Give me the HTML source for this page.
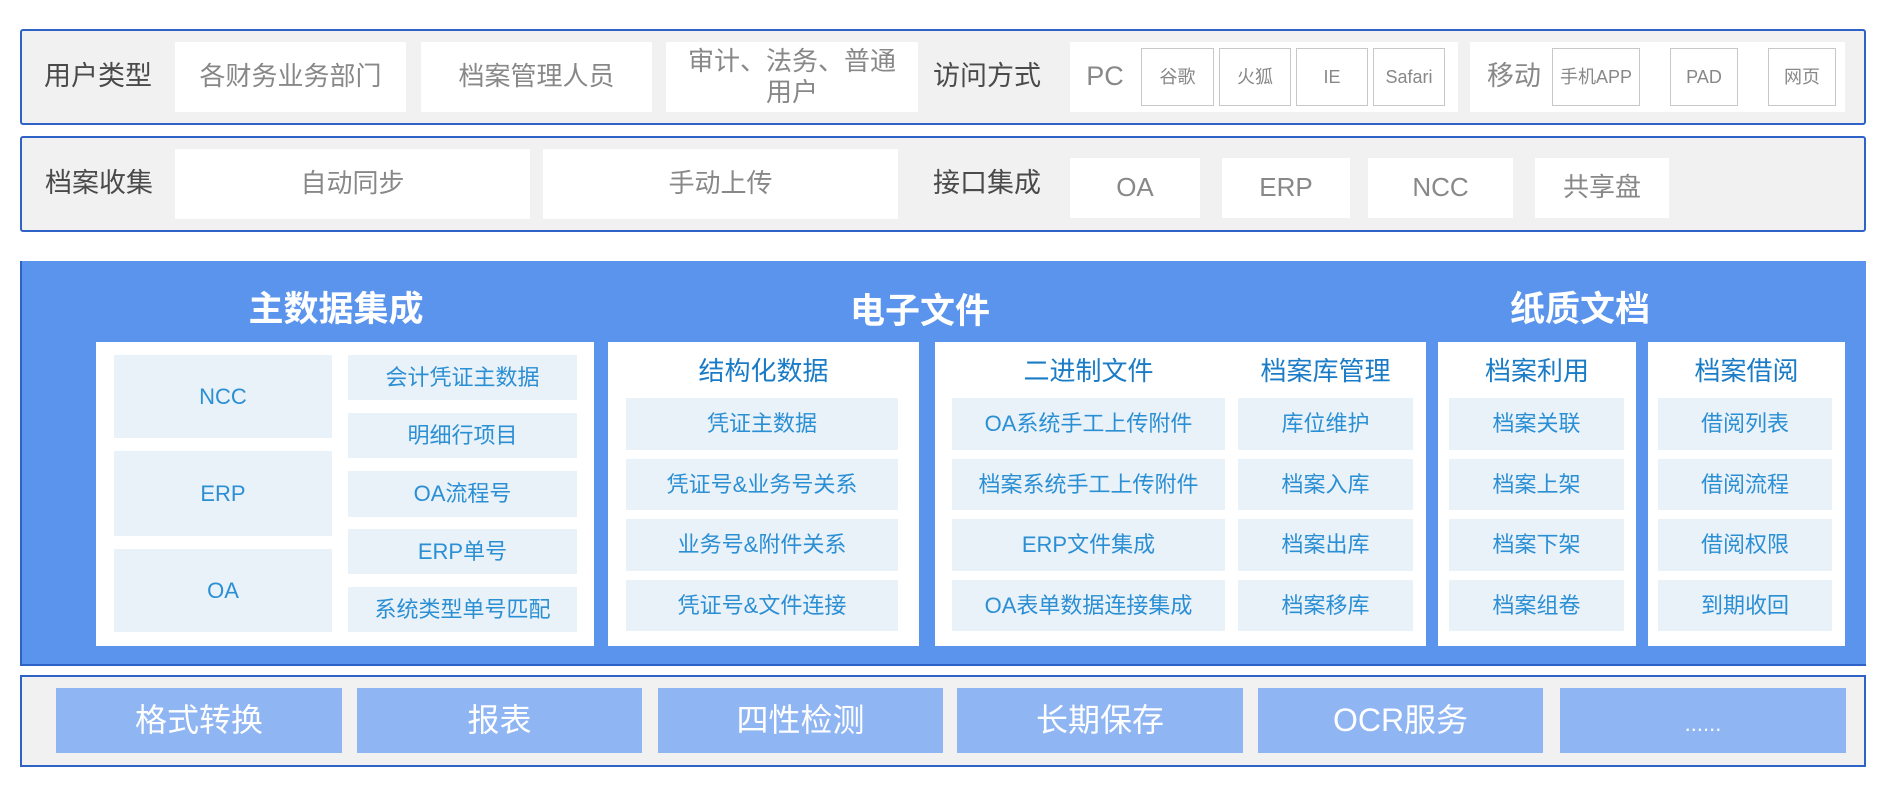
<!DOCTYPE html>
<html><head><meta charset="utf-8"><style>
*{margin:0;padding:0;box-sizing:border-box}
body{width:1881px;height:790px;background:#fff;position:relative;overflow:hidden;font-family:"Liberation Sans","Noto Sans CJK SC",sans-serif}
.a{position:absolute;display:flex;align-items:center;justify-content:center;text-align:center;line-height:1.15}
.row{background:#f1f1f1;border:2px solid #2e62c6;border-radius:3px}
.lab{color:#4a4a4a;font-size:27px;font-weight:normal}
.c{background:#fff;color:#888;font-size:26px}
.s{border:1.5px solid #c8c8c8;color:#888;font-size:18px;background:#fff}
.t{color:#fff;font-size:35px;font-weight:bold}
.p{background:#fff}
.h{color:#1a7bc6;font-size:26px}
.i{background:#e9f1f9;color:#2b8fd4;font-size:22px}
.b{background:#8fb5f3;color:#fff;font-size:32px}
</style></head><body>
<!-- row1 -->
<div class="a row" style="left:20px;top:29px;width:1846px;height:96px"></div>
<div class="a lab" style="left:40px;top:42px;width:116px;height:70px">用户类型</div>
<div class="a c" style="left:175px;top:42px;width:231px;height:70px">各财务业务部门</div>
<div class="a c" style="left:421px;top:42px;width:231px;height:70px">档案管理人员</div>
<div class="a c" style="left:666px;top:42px;width:252px;height:70px;line-height:1.2">审计、法务、普通<br>用户</div>
<div class="a lab" style="left:928px;top:42px;width:118px;height:70px">访问方式</div>
<div class="a c" style="left:1070px;top:42px;width:388px;height:70px"></div>
<div class="a" style="left:1080px;top:42px;width:50px;height:70px;color:#888;font-size:27px">PC</div>
<div class="a s" style="left:1141px;top:48px;width:73px;height:58px">谷歌</div>
<div class="a s" style="left:1219px;top:48px;width:72px;height:58px">火狐</div>
<div class="a s" style="left:1296px;top:48px;width:72px;height:58px">IE</div>
<div class="a s" style="left:1373px;top:48px;width:72px;height:58px">Safari</div>
<div class="a c" style="left:1470px;top:42px;width:375px;height:70px"></div>
<div class="a" style="left:1484px;top:42px;width:60px;height:70px;color:#888;font-size:27px">移动</div>
<div class="a s" style="left:1552px;top:48px;width:88px;height:58px">手机APP</div>
<div class="a s" style="left:1670px;top:48px;width:68px;height:58px">PAD</div>
<div class="a s" style="left:1768px;top:48px;width:68px;height:58px">网页</div>
<!-- row2 -->
<div class="a row" style="left:20px;top:136px;width:1846px;height:96px"></div>
<div class="a lab" style="left:40px;top:149px;width:118px;height:70px">档案收集</div>
<div class="a c" style="left:175px;top:149px;width:355px;height:70px">自动同步</div>
<div class="a c" style="left:543px;top:149px;width:355px;height:70px">手动上传</div>
<div class="a lab" style="left:928px;top:149px;width:118px;height:70px">接口集成</div>
<div class="a c" style="left:1070px;top:158px;width:130px;height:60px">OA</div>
<div class="a c" style="left:1222px;top:158px;width:128px;height:60px">ERP</div>
<div class="a c" style="left:1368px;top:158px;width:145px;height:60px">NCC</div>
<div class="a c" style="left:1535px;top:158px;width:134px;height:60px">共享盘</div>
<!-- main -->
<div class="a" style="left:20px;top:261px;width:1846px;height:405px;background:#5b94ed;border-left:2px solid #2e62c6;border-bottom:2px solid #2e62c6"></div>
<div class="a t" style="left:196px;top:288px;width:280px;height:44px">主数据集成</div>
<div class="a t" style="left:800px;top:290px;width:240px;height:44px">电子文件</div>
<div class="a t" style="left:1460px;top:288px;width:240px;height:44px">纸质文档</div>
<div class="a p" style="left:96px;top:342px;width:498px;height:304px"></div>
<div class="a i" style="left:114px;top:355px;width:218px;height:83px">NCC</div>
<div class="a i" style="left:114px;top:451px;width:218px;height:85px">ERP</div>
<div class="a i" style="left:114px;top:549px;width:218px;height:83px">OA</div>
<div class="a i" style="left:348px;top:355px;width:229px;height:45px">会计凭证主数据</div>
<div class="a i" style="left:348px;top:413px;width:229px;height:45px">明细行项目</div>
<div class="a i" style="left:348px;top:471px;width:229px;height:46px">OA流程号</div>
<div class="a i" style="left:348px;top:529px;width:229px;height:45px">ERP单号</div>
<div class="a i" style="left:348px;top:587px;width:229px;height:45px">系统类型单号匹配</div>
<div class="a p" style="left:608px;top:342px;width:311px;height:304px"></div>
<div class="a h" style="left:608px;top:352px;width:311px;height:40px">结构化数据</div>
<div class="a i" style="left:626px;top:398px;width:272px;height:52px">凭证主数据</div>
<div class="a i" style="left:626px;top:459px;width:272px;height:51px">凭证号&amp;业务号关系</div>
<div class="a i" style="left:626px;top:519px;width:272px;height:52px">业务号&amp;附件关系</div>
<div class="a i" style="left:626px;top:580px;width:272px;height:51px">凭证号&amp;文件连接</div>
<div class="a p" style="left:935px;top:342px;width:491px;height:304px"></div>
<div class="a h" style="left:952px;top:352px;width:273px;height:40px">二进制文件</div>
<div class="a h" style="left:1238px;top:352px;width:175px;height:40px">档案库管理</div>
<div class="a i" style="left:952px;top:398px;width:273px;height:52px">OA系统手工上传附件</div>
<div class="a i" style="left:952px;top:459px;width:273px;height:51px">档案系统手工上传附件</div>
<div class="a i" style="left:952px;top:519px;width:273px;height:52px">ERP文件集成</div>
<div class="a i" style="left:952px;top:580px;width:273px;height:51px">OA表单数据连接集成</div>
<div class="a i" style="left:1238px;top:398px;width:175px;height:52px">库位维护</div>
<div class="a i" style="left:1238px;top:459px;width:175px;height:51px">档案入库</div>
<div class="a i" style="left:1238px;top:519px;width:175px;height:52px">档案出库</div>
<div class="a i" style="left:1238px;top:580px;width:175px;height:51px">档案移库</div>
<div class="a p" style="left:1438px;top:342px;width:198px;height:304px"></div>
<div class="a h" style="left:1438px;top:352px;width:198px;height:40px">档案利用</div>
<div class="a i" style="left:1449px;top:398px;width:175px;height:52px">档案关联</div>
<div class="a i" style="left:1449px;top:459px;width:175px;height:51px">档案上架</div>
<div class="a i" style="left:1449px;top:519px;width:175px;height:52px">档案下架</div>
<div class="a i" style="left:1449px;top:580px;width:175px;height:51px">档案组卷</div>
<div class="a p" style="left:1648px;top:342px;width:197px;height:304px"></div>
<div class="a h" style="left:1648px;top:352px;width:197px;height:40px">档案借阅</div>
<div class="a i" style="left:1658px;top:398px;width:174px;height:52px">借阅列表</div>
<div class="a i" style="left:1658px;top:459px;width:174px;height:51px">借阅流程</div>
<div class="a i" style="left:1658px;top:519px;width:174px;height:52px">借阅权限</div>
<div class="a i" style="left:1658px;top:580px;width:174px;height:51px">到期收回</div>
<!-- bottom -->
<div class="a row" style="left:20px;top:675px;width:1846px;height:92px;border-radius:0"></div>
<div class="a b" style="left:56px;top:688px;width:286px;height:65px">格式转换</div>
<div class="a b" style="left:357px;top:688px;width:285px;height:65px">报表</div>
<div class="a b" style="left:658px;top:688px;width:285px;height:65px">四性检测</div>
<div class="a b" style="left:957px;top:688px;width:286px;height:65px">长期保存</div>
<div class="a b" style="left:1258px;top:688px;width:285px;height:65px">OCR服务</div>
<div class="a b" style="left:1560px;top:688px;width:286px;height:65px;font-size:22px;padding-top:6px">......</div>
</body></html>
